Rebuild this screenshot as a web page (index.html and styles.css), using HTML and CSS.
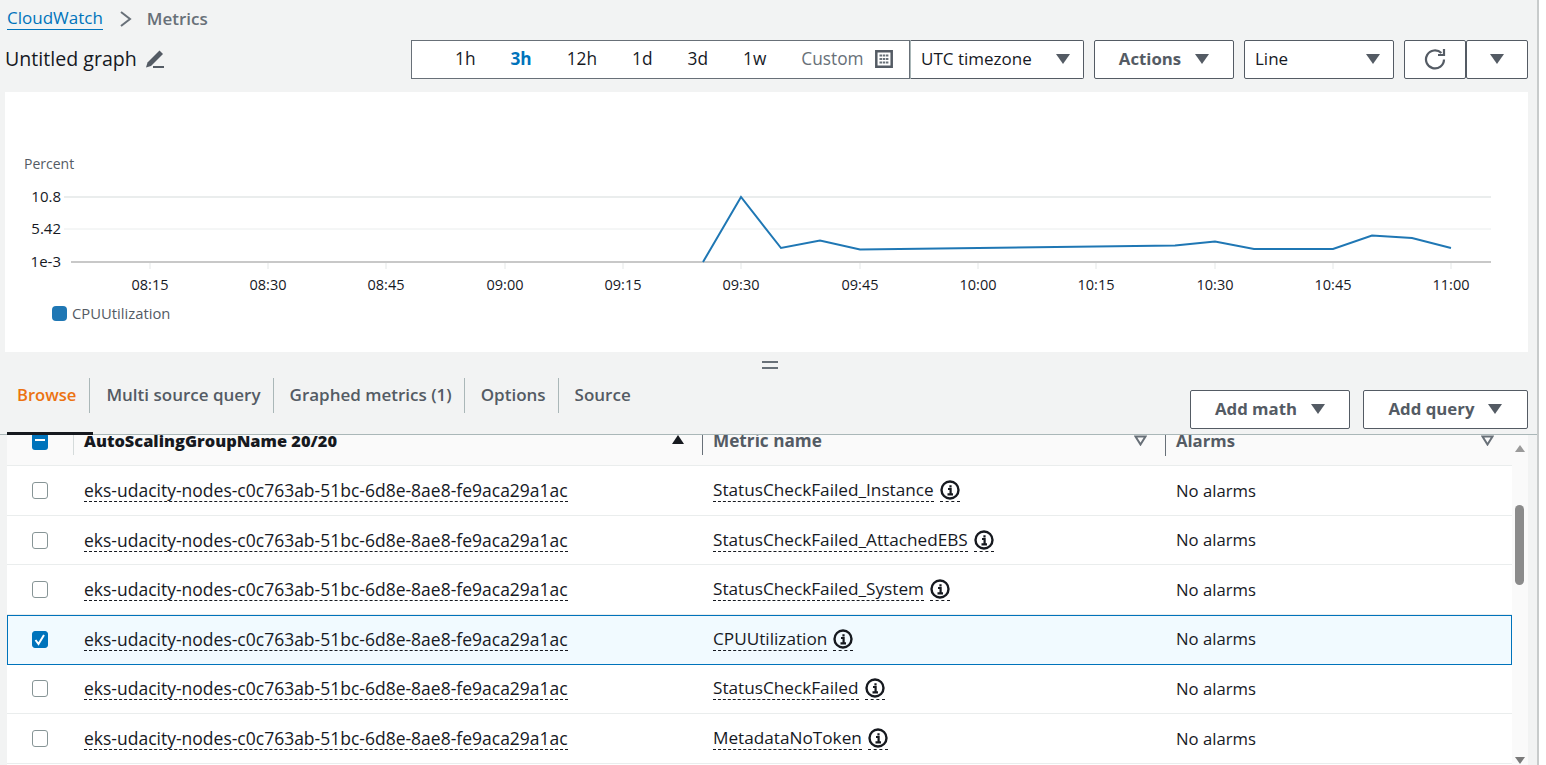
FILE: index.html
```html
<!DOCTYPE html>
<html lang="en">

<head>
  <meta charset="UTF-8" />
  <meta name="viewport" content="width=device-width, initial-scale=1.0" />
  <title>CloudWatch Metrics</title>
  <link rel="stylesheet" href="styles.css">
</head>

<body>
  <div class="page">
    <!-- Breadcrumb -->
    <nav class="crumbs">
      <a class="crumb-link">CloudWatch</a>
      <svg class="crumb-sep" width="14" height="18" viewBox="0 0 14 18"><path d="M2 2l9 7-9 7" fill="none" stroke="#687078" stroke-width="2"/></svg>
      <span class="crumb-current">Metrics</span>
    </nav>

    <!-- Graph toolbar -->
    <div class="toolbar">
      <div class="graph-title">
        <span>Untitled graph</span>
        <svg width="20" height="20" viewBox="0 0 20 20"><path d="M1 18.500l1.500-5L13 3l1.500-1.500 3.500 3.500-1.500 1.500L6 17z" fill="#545b64"/><path d="M8 18h11" stroke="#545b64" stroke-width="2"/></svg>
      </div>
      <div class="range">
        <span class="range-item">1h</span>
        <span class="range-item active">3h</span>
        <span class="range-item">12h</span>
        <span class="range-item">1d</span>
        <span class="range-item">3d</span>
        <span class="range-item">1w</span>
        <span class="range-custom">Custom
          <svg width="18" height="18" viewBox="0 0 18 18"><path d="M1.300 1.300h15.400v15.400H1.300z" fill="none" stroke="#545b64" stroke-width="2.500"/><path d="M4.500 5.500h9M4.500 9h9M4.500 12.500h9" stroke="#687078" stroke-width="2" stroke-dasharray="2.500 .7"/></svg>
        </span>
      </div>
      <div class="select tz">UTC timezone <i class="caret"></i></div>
      <div class="btn actions">Actions <i class="caret"></i></div>
      <div class="select line">Line <i class="caret"></i></div>
      <div class="btn-pair">
        <div class="btn refresh">
          <svg width="22" height="22" viewBox="0 0 22 22"><path d="M17.400 5.100A9 9 0 1 0 20 11.500" fill="none" stroke="#545b64" stroke-width="2.200"/><path d="M20 1v6h-6" fill="none" stroke="#545b64" stroke-width="2.200"/></svg>
        </div>
        <div class="btn more"><i class="caret"></i></div>
      </div>
    </div>

    <!-- Chart -->
    <section class="chart-panel">
      <svg class="chart" width="1523" height="260" viewBox="5 92 1523 260">
        <text class="unit" x="24" y="169">Percent</text>
        <path d="M64 197H1491" stroke="#eaeded" stroke-width="2"/>
        <path d="M64 229H1491" stroke="#eaeded" stroke-width="1"/>
        <path d="M71 262H1491" stroke="#c8c8c8" stroke-width="2"/>
        <path d="M150 263v6M268 263v6M386 263v6M505 263v6M623 263v6M741 263v6M860 263v6M978 263v6M1096 263v6M1215 263v6M1333 263v6M1451 263v6" stroke="#e4e7e7"/>
        <text class="ylabel" x="61" y="202">10.8</text>
        <text class="ylabel" x="61" y="234">5.42</text>
        <text class="ylabel" x="61" y="267">1e-3</text>
        <g class="xlabels">
          <text x="150" y="290">08:15</text>
          <text x="268" y="290">08:30</text>
          <text x="386" y="290">08:45</text>
          <text x="505" y="290">09:00</text>
          <text x="623" y="290">09:15</text>
          <text x="741" y="290">09:30</text>
          <text x="860" y="290">09:45</text>
          <text x="978" y="290">10:00</text>
          <text x="1096" y="290">10:15</text>
          <text x="1215" y="290">10:30</text>
          <text x="1333" y="290">10:45</text>
          <text x="1451" y="290">11:00</text>
        </g>
        <polyline points="703,262 741,197 781,248 820,240.500 860,249.500 1175,245.500 1215,241.500 1254,249 1333,249 1372,235.500 1412,238 1451,248" fill="none" stroke="#1f77b4" stroke-width="2"/>
        <rect x="52" y="306" width="15" height="15" rx="4" fill="#1f77b4"/>
        <text class="legend" x="72" y="319">CPUUtilization</text>
      </svg>
    </section>

    <div class="splitter"></div>

    <!-- Tabs -->
    <div class="tabbar">
      <ul class="tabs">
        <li class="tab active">Browse</li>
        <li class="tab">Multi source query</li>
        <li class="tab">Graphed metrics (1)</li>
        <li class="tab">Options</li>
        <li class="tab">Source</li>
      </ul>
      <div class="tab-actions">
        <div class="btn add-math">Add math <i class="caret"></i></div>
        <div class="btn add-query">Add query <i class="caret"></i></div>
      </div>
    </div>

    <!-- Metrics table -->
    <div class="table-wrap">
      <div class="table">
        <div class="row head">
          <div class="cell check"><span class="box indeterminate"></span></div>
          <div class="cell name-col"><strong>AutoScalingGroupName 20/20</strong><i class="sort up"></i></div>
          <div class="cell metric-col"><b>Metric name</b><svg class="sort-icon" width="13" height="11" viewBox="0 0 13 11"><path d="M1.500 1.500h10L6.500 9.500z" fill="#fafafa" stroke="#687078" stroke-width="2"/></svg></div>
          <div class="cell alarm-col"><b>Alarms</b><svg class="sort-icon" width="13" height="11" viewBox="0 0 13 11"><path d="M1.500 1.500h10L6.500 9.500z" fill="#fafafa" stroke="#687078" stroke-width="2"/></svg></div>
        </div>
        <div id="rows"></div>
      </div>
      <div class="scrollbar">
        <i class="arrow-up"></i>
        <i class="thumb"></i>
        <i class="arrow-down"></i>
      </div>
    </div>
  </div>

  <script>
    const metrics = [
      "StatusCheckFailed_Instance",
      "StatusCheckFailed_AttachedEBS",
      "StatusCheckFailed_System",
      "CPUUtilization",
      "StatusCheckFailed",
      "MetadataNoToken"
    ];

    const container = document.getElementById("rows");

    metrics.forEach(metric => {
      const selected = metric === "CPUUtilization";
      const row = document.createElement("div");
      row.className = selected ? "row selected" : "row";
      row.innerHTML = `
        <div class="cell check"><span class="box${selected ? " checked" : ""}">${selected ? '<svg width="16" height="17" viewBox="0 0 16 17"><path d="M3.500 9l3 4 5.500-9" fill="none" stroke="#fff" stroke-width="2"/></svg>' : ""}</span></div>
        <div class="cell name-col"><span class="dashed">eks-udacity-nodes-c0c763ab-51bc-6d8e-8ae8-fe9aca29a1ac</span></div>
        <div class="cell metric-col"><span class="dashed">${metric}</span><span class="dashed info"><svg width="20" height="20" viewBox="0 0 20 20"><circle cx="10" cy="10" r="8.500" fill="none" stroke="#16191f" stroke-width="2.400"/><path d="M8 9h2.600v5M7.500 14.300h5.500M10.500 5.200v2.200" fill="none" stroke="#16191f" stroke-width="2.200"/></svg></span></div>
        <div class="cell alarm-col">No alarms</div>
      `;
      container.appendChild(row);
    });
  </script>
</body>

</html>
```

FILE: styles.css
```css
body {
  font-family: 'Open Sans', 'Noto Sans', sans-serif;
  font-size: 17px;
  color: #16191f;
  background-color: #fff;
  margin: 0;
  height: 765px;
  overflow: hidden;
}

.page {
  width: 1539px;
  height: 765px;
  box-sizing: border-box;
  background: #f2f3f3;
  border-right: 2px solid #c8cbcb;
  overflow: hidden;
}

/* Breadcrumb */
.crumbs {
  display: flex;
  align-items: center;
  height: 37px;
  padding-left: 7px;
}

.crumb-link {
  color: #0073bb;
  border-bottom: 1px solid #0073bb;
  line-height: 22px;
}

.crumb-sep {
  margin: 0 14px 0 16px;
}

.crumb-current {
  color: #687078;
  font-weight: 600;
}

/* Toolbar */
.toolbar {
  display: flex;
  align-items: flex-start;
  height: 39px;
  margin-top: 3px;
  padding-left: 5px;
}

.graph-title {
  display: flex;
  align-items: center;
  gap: 8px;
  width: 406px;
  height: 37px;
  font-size: 19.600px;
}

.range {
  display: flex;
  align-items: center;
  gap: 35px;
  width: 499px;
  height: 39px;
  box-sizing: border-box;
  background: #fff;
  border: 1px solid #687078;
  padding: 0 0 2px 43px;
  font-size: 17.300px;
}

.range-item.active {
  color: #0073bb;
  font-weight: 700;
}

.range-custom {
  display: flex;
  align-items: center;
  gap: 11px;
  color: #687078;
}

.select,
.btn {
  display: flex;
  align-items: center;
  box-sizing: border-box;
  background: #fff;
  border: 1px solid #545b64;
  border-radius: 2px;
  height: 39px;
  padding-bottom: 2px;
}

.btn {
  justify-content: center;
  gap: 14px;
  color: #545b64;
  font-weight: 700;
  font-size: 16.800px;
}

.select {
  justify-content: space-between;
  padding: 0 13px 2px 10px;
}

.caret {
  display: block;
  width: 0;
  height: 0;
  border-left: 7px solid transparent;
  border-right: 7px solid transparent;
  border-top: 10px solid #545b64;
}

.tz {
  width: 174px;
  border-left-color: #aab7b8;
  border-radius: 0 2px 2px 0;
}

.actions {
  width: 140px;
  margin-left: 10px;
}

.line {
  width: 150px;
  margin-left: 10px;
}

.btn-pair {
  display: flex;
  margin-left: 10px;
}

.refresh,
.more {
  width: 62px;
}

/* Chart */
.chart-panel {
  width: 1523px;
  height: 260px;
  margin: 13px 0 0 5px;
  background: #fff;
}

.chart {
  display: block;
}

.chart text {
  font-family: 'Open Sans', sans-serif;
  font-size: 14.500px;
  fill: #16191f;
}

.chart .unit {
  font-size: 14px;
  fill: #545b64;
}

.chart .legend {
  font-size: 14.800px;
  fill: #545b64;
}

.chart .ylabel {
  font-size: 15px;
  text-anchor: end;
}

.xlabels text {
  text-anchor: middle;
}

.splitter {
  width: 16px;
  height: 8px;
  margin: 9px 0 0 762px;
  border-top: 2px solid #687078;
  border-bottom: 2px solid #687078;
  box-sizing: border-box;
}

/* Tabs */
.tabbar {
  display: flex;
  justify-content: space-between;
  height: 63px;
  margin-top: 3px;
  border-bottom: 1px solid #aab7b8;
  box-sizing: border-box;
}

.tabs {
  display: flex;
  list-style: none;
  margin: 6px 0 0 7px;
  padding: 0;
  color: #545b64;
  font-weight: 600;
}

.tab {
  height: 35px;
  line-height: 33px;
  padding: 0 12px 0 16px;
  border-left: 1px solid #aab7b8;
}

.tab:first-child {
  border-left: 0;
  padding: 0 13px 0 10px;
  font-size: 16.600px;
}

.tab.active {
  color: #ec7211;
  position: relative;
}

.tab.active::after {
  content: "";
  position: absolute;
  left: 0;
  right: -4px;
  top: 54px;
  height: 3px;
  background: #16191f;
}

.tab-actions {
  display: flex;
  gap: 13px;
  margin: 18px 9px 0 0;
}

.add-math {
  width: 160px;
}

.add-query {
  width: 165px;
}

/* Table */
.table-wrap {
  display: flex;
  width: 1521px;
  height: 331px;
  margin-left: 7px;
}

.table {
  width: 1505px;
  background: #fff;
  overflow: hidden;
}

.row {
  display: grid;
  grid-template-columns: 66px 629px 463px 1fr;
  height: 49.600px;
  box-sizing: border-box;
  border-bottom: 1px solid #eaeded;
  padding-left: 11px;
}

.row.head {
  height: 31.300px;
  background: #fafafa;
  font-size: 16px;
  font-weight: 700;
}

.row.selected {
  background: #f1faff;
  border: 1px solid #0073bb;
  padding-left: 10px;
  padding-bottom: 1px;
}

.cell {
  display: flex;
  align-items: center;
  min-width: 0;
}

.head .cell {
  height: 12px;
  justify-content: space-between;
  line-height: 12px;
}

.head .name-col,
.head .metric-col,
.head .alarm-col {
  margin-left: -11px;
  padding-left: 10px;
  border-left: 1px solid #d5dbdb;
  height: 20px;
  margin-bottom: -8px;
  align-items: flex-start;
}

.head .name-col {
  padding-right: 29px;
  font-size: 16.400px;
}

.head .metric-col {
  padding-right: 29px;
}

.head .alarm-col {
  padding-right: 18px;
}

.head .metric-col,
.head .alarm-col {
  color: #545b64;
  border-left-color: #687078;
}

.head b {
  font-weight: 700;
}

.check {
  padding-left: 14px;
}

.box {
  display: block;
  width: 16px;
  height: 17px;
  box-sizing: border-box;
  border: 1px solid #879596;
  border-radius: 3px;
  background: #fff;
}

.box.checked {
  background: #0073bb;
  border-color: #0073bb;
}

.box.checked svg {
  display: block;
  margin: -1px;
}

.box.indeterminate {
  background: #0073bb;
  border: 0;
  position: relative;
}

.box.indeterminate::after {
  content: "";
  position: absolute;
  left: 3px;
  right: 3px;
  top: 6px;
  height: 2px;
  background: #fff;
}

.name-col {
  font-size: 17.500px;
}

.metric-col {
  font-size: 17.200px;
}

.alarm-col {
  font-size: 16.700px;
  padding-bottom: 1px;
}

.dashed {
  border-bottom: 1px dashed #16191f;
  line-height: 22px;
}

.info {
  display: block;
  height: 22px;
  margin-left: 6px;
}

.info svg {
  display: block;
  margin-top: 1px;
}

.sort {
  display: block;
  width: 0;
  height: 0;
  border-left: 6px solid transparent;
  border-right: 6px solid transparent;
  border-top: 9px solid #687078;
}

.sort.up {
  border-top: 0;
  border-bottom: 9px solid #16191f;
}

/* Scrollbar */
.scrollbar {
  position: relative;
  width: 16px;
  background: #fafafa;
}

.thumb {
  position: absolute;
  left: 3px;
  top: 70px;
  width: 9px;
  height: 80px;
  border-radius: 5px;
  background: #8b8b8b;
}

.arrow-up,
.arrow-down {
  position: absolute;
  left: 3px;
  width: 0;
  height: 0;
  border-left: 5px solid transparent;
  border-right: 5px solid transparent;
}

.arrow-up {
  top: 10px;
  border-bottom: 7px solid #9a9a9a;
}

.arrow-down {
  top: 322px;
  border-top: 7px solid #7a7a7a;
}
```
